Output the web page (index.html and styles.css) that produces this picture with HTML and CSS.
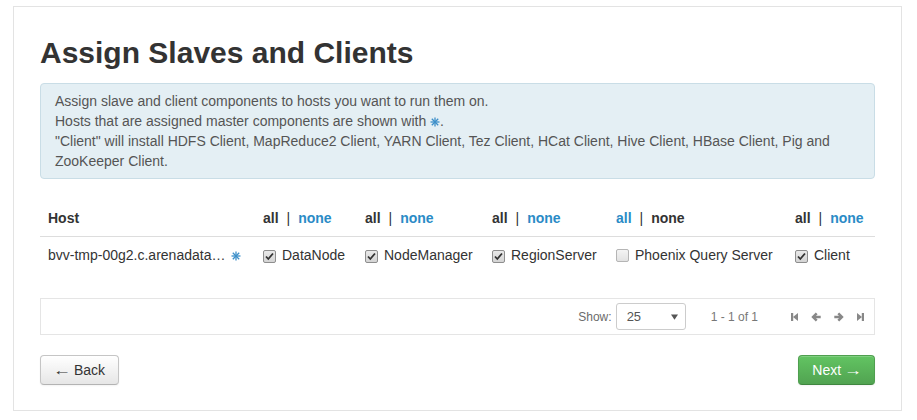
FILE: index.html
```html
<!DOCTYPE html>
<html>
<head>
<meta charset="utf-8">
<title>Assign Slaves and Clients</title>
<link rel="stylesheet" href="styles.css">
</head>
<body>
<div class="wizard">
  <h2 class="title">Assign Slaves and Clients</h2>
  <div class="alert">
    Assign slave and client components to hosts you want to run them on.<br>
    Hosts that are assigned master components are shown with <svg class="star" viewBox="0 0 10 10"><g><line x1="5" y1="0.5" x2="5" y2="9.5"/><line x1="0.5" y1="5" x2="9.5" y2="5"/><line x1="1.8" y1="1.8" x2="8.2" y2="8.2"/><line x1="8.2" y1="1.8" x2="1.8" y2="8.2"/></g></svg>.<br>
    "Client" will install HDFS Client, MapReduce2 Client, YARN Client, Tez Client, HCat Client, Hive Client, HBase Client, Pig and ZooKeeper Client.
  </div>

  <table class="hosts">
    <colgroup>
      <col class="c-host"><col class="c-dn"><col class="c-nm"><col class="c-rs"><col class="c-pqs"><col class="c-cl">
    </colgroup>
    <thead>
      <tr>
        <th>Host</th>
        <th><span class="sel">all</span><span class="sep">|</span><a class="lnk">none</a></th>
        <th><span class="sel">all</span><span class="sep">|</span><a class="lnk">none</a></th>
        <th><span class="sel">all</span><span class="sep">|</span><a class="lnk">none</a></th>
        <th><a class="lnk">all</a><span class="sep">|</span><span class="sel">none</span></th>
        <th><span class="sel">all</span><span class="sep">|</span><a class="lnk">none</a></th>
      </tr>
    </thead>
    <tbody>
      <tr>
        <td>bvv-tmp-00g2.c.arenadata… <svg class="star host-star" viewBox="0 0 10 10"><g><line x1="5" y1="0.5" x2="5" y2="9.5"/><line x1="0.5" y1="5" x2="9.5" y2="5"/><line x1="1.8" y1="1.8" x2="8.2" y2="8.2"/><line x1="8.2" y1="1.8" x2="1.8" y2="8.2"/></g></svg></td>
        <td><label class="chk"><span class="box on"><svg viewBox="0 0 11 11"><path d="M2 5.5 L4.3 8 L9 2.5"/></svg></span>DataNode</label></td>
        <td><label class="chk"><span class="box on"><svg viewBox="0 0 11 11"><path d="M2 5.5 L4.3 8 L9 2.5"/></svg></span>NodeManager</label></td>
        <td><label class="chk"><span class="box on"><svg viewBox="0 0 11 11"><path d="M2 5.5 L4.3 8 L9 2.5"/></svg></span>RegionServer</label></td>
        <td><label class="chk"><span class="box"></span>Phoenix Query Server</label></td>
        <td><label class="chk"><span class="box on"><svg viewBox="0 0 11 11"><path d="M2 5.5 L4.3 8 L9 2.5"/></svg></span>Client</label></td>
      </tr>
    </tbody>
  </table>

  <div class="pager">
    <span class="show">Show:</span>
    <div class="select"><span>25</span><svg class="caret" viewBox="0 0 8 6"><path d="M0 0 H8 L4 6 Z"/></svg></div>
    <span class="count">1 - 1 of 1</span>
    <div class="nav">
      <svg class="ico" viewBox="0 0 7 10"><rect x="0" y="1" width="2.2" height="8"/><path d="M7 1 L2 5 L7 9 Z"/></svg>
      <svg class="ico arrow" viewBox="0 0 10 10"><path d="M0.3 5 L4.8 0.6 L6.6 2.3 L5 3.8 H9.7 V6.2 H5 L6.6 7.7 L4.8 9.4 Z"/></svg>
      <svg class="ico arrow" viewBox="0 0 10 10"><path d="M9.7 5 L5.2 0.6 L3.4 2.3 L5 3.8 H0.3 V6.2 H5 L3.4 7.7 L5.2 9.4 Z"/></svg>
      <svg class="ico" viewBox="0 0 7 10"><rect x="4.8" y="1" width="2.2" height="8"/><path d="M0 1 L5 5 L0 9 Z"/></svg>
    </div>
  </div>

  <div class="actions">
    <button class="btn"><span class="arr">←</span> Back</button>
    <button class="btn btn-success">Next <span class="arr">→</span></button>
  </div>
</div>
</body>
</html>
```

FILE: styles.css
```css
html, body {
  background: #fff;
}
body {
  margin: 6px 15px 0 13px;
  font-family: "Liberation Sans", Arial, sans-serif;
  font-size: 14px;
  line-height: 20px;
  color: #333;
}
.wizard {
  border: 1px solid #e3e3e3;
  padding: 28px 26px 25px;
  box-sizing: border-box;
}
.title {
  margin: 0 0 12px;
  font-size: 30px;
  line-height: 36px;
  font-weight: bold;
  color: #333;
}
.alert {
  background: #e4eff4;
  border: 1px solid #c9dde6;
  border-radius: 4px;
  padding: 7px 14px;
  color: #555;
  margin-bottom: 21px;
}
.star {
  width: 10px;
  height: 10px;
  vertical-align: -1px;
}
.star g {
  stroke: #3d8fc9;
  stroke-width: 1.3;
}
.host-star {
  margin-left: 2px;
}
.hosts {
  width: 100%;
  border-collapse: collapse;
  table-layout: fixed;
}
.c-host { width: 215px; }
.c-dn { width: 102px; }
.c-nm { width: 127px; }
.c-rs { width: 124px; }
.c-pqs { width: 179px; }
.c-cl { width: 88px; }
.hosts th, .hosts td {
  padding: 8px;
  text-align: left;
  white-space: nowrap;
  line-height: 20px;
  height: 20px;
}
.hosts th {
  font-weight: bold;
  border-bottom: 1px solid #ddd;
}
.sel { color: #333; }
.lnk { color: #2a8bc6; }
.sep {
  font-weight: normal;
  margin: 0 8px;
}
.chk {
  display: inline-block;
  line-height: 20px;
}
.box {
  display: inline-block;
  box-sizing: border-box;
  width: 13px;
  height: 13px;
  border: 1px solid #b5b5b5;
  border-radius: 2px;
  background: linear-gradient(#f4f4f4, #e2e2e2);
  margin: 0 6px 0 0;
  vertical-align: -2px;
  line-height: 0;
}
.box.on {
  border-color: #8e8e8e;
  background: linear-gradient(#e9e9e9, #d4d4d4);
}
.box svg {
  width: 11px;
  height: 11px;
}
.box svg path {
  fill: none;
  stroke: #333;
  stroke-width: 1.8;
}
.pager {
  margin-top: 25px;
  border: 1px solid #e5e5e5;
  height: 37px;
  box-sizing: border-box;
  display: flex;
  justify-content: flex-end;
  align-items: center;
  padding: 0 10px 0 0;
  font-size: 12px;
  color: #777;
}
.show { color: #6b6b6b; }
.select {
  margin-left: 4px;
  width: 70px;
  height: 27px;
  box-sizing: border-box;
  border: 1px solid #ccc;
  border-radius: 3px;
  display: flex;
  align-items: center;
  justify-content: space-between;
  padding: 0 7px 0 10px;
  font-size: 13px;
  color: #555;
}
.caret {
  width: 7px;
  height: 6px;
  fill: #555;
}
.count {
  margin-left: 25px;
}
.nav {
  margin-left: 33px;
  display: flex;
  align-items: center;
  gap: 13px;
}
.ico {
  height: 10px;
  width: 7px;
  fill: #888;
}
.ico.arrow {
  width: 10px;
}
.actions {
  margin-top: 20px;
  display: flex;
  justify-content: space-between;
}
.btn {
  font-family: "Liberation Sans", Arial, sans-serif;
  font-size: 14px;
  line-height: 20px;
  height: 30px;
  padding: 0 13px;
  border: 1px solid #c5c5c5;
  border-bottom-color: #b3b3b3;
  border-radius: 4px;
  background: linear-gradient(#ffffff, #e6e6e6);
  color: #333;
  box-shadow: inset 0 1px 0 rgba(255,255,255,.2), 0 1px 2px rgba(0,0,0,.05);
}
.arr {
  display: inline-block;
  transform: scaleX(1.3);
  margin: 0 1px;
}
.btn-success {
  color: #fff;
  background: linear-gradient(#62c462, #51a351);
  border-color: #4f9f4f #4f9f4f #3f863f;
}
```
